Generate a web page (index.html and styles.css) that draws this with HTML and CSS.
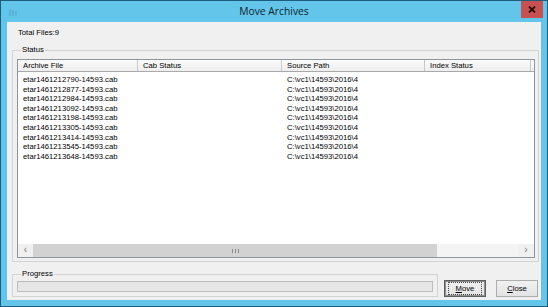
FILE: index.html
```html
<!DOCTYPE html>
<html lang="en">
<head>
    <meta charset="UTF-8">
    <title>Move Archives</title>
    <link rel="stylesheet" href="styles.css">
</head>
<body>
    <div class="window">
        <div class="titlebar">
            <div class="app-icon">
                <svg width="10" height="9" viewBox="0 0 10 9">
                    <path d="M1 1v7M4 2v6M7 3v5" stroke="#3f8fb0" stroke-width="1" fill="none"/>
                </svg>
            </div>
            <div class="title">Move Archives</div>
            <div class="caption-btns">
                <div class="close-btn">
                    <svg width="8" height="7" viewBox="0 0 8 7">
                        <path d="M1 0.5L7 6.5M7 0.5L1 6.5" stroke="#2b0f0f" stroke-width="1.8"/>
                    </svg>
                </div>
            </div>
        </div>
        <div class="client">
            <div class="total">Total Files:9</div>
            <fieldset class="group status-group">
                <legend>Status</legend>
                <div class="listview">
                    <div class="lv-header">
                        <div class="col">Archive File</div>
                        <div class="col">Cab Status</div>
                        <div class="col">Source Path</div>
                        <div class="col">Index Status</div>
                    </div>
                    <div class="lv-body" id="rows">
                        <!-- rows filled by script -->
                    </div>
                    <div class="hscroll">
                        <div class="sb-btn left">&lsaquo;</div>
                        <div class="sb-thumb"><span class="grip"></span></div>
                        <div class="sb-track"></div>
                        <div class="sb-btn right">&rsaquo;</div>
                    </div>
                </div>
            </fieldset>
            <div class="bottom-row">
                <fieldset class="group progress-group">
                    <legend>Progress</legend>
                    <div class="progress"></div>
                </fieldset>
                <div class="buttons">
                    <button class="btn default"><span class="focus"><u>M</u>ove</span></button>
                    <button class="btn"><span><u>C</u>lose</span></button>
                </div>
            </div>
        </div>
    </div>
    <script>
    // archives waiting to be moved
    const archives = [
        "etar1461212790-14593.cab",
        "etar1461212877-14593.cab",
        "etar1461212984-14593.cab",
        "etar1461213092-14593.cab",
        "etar1461213198-14593.cab",
        "etar1461213305-14593.cab",
        "etar1461213414-14593.cab",
        "etar1461213545-14593.cab",
        "etar1461213648-14593.cab"
    ];
    const rows = document.getElementById('rows');
    archives.forEach(name => {
        rows.innerHTML += `
            <div class="lv-row">
                <div class="col">${name}</div>
                <div class="col"></div>
                <div class="col">C:\\vc1\\14593\\2016\\4</div>
                <div class="col"></div>
            </div>
        `;
    });
    </script>
</body>
</html>
```

FILE: styles.css
```css
body {
    margin: 0;
    padding: 0;
    font-family: "Liberation Sans", Arial, sans-serif;
    font-size: 7.7px;
    color: #000;
}
.window {
    width: 548px;
    height: 307px;
    box-sizing: border-box;
    border: 1px solid #1f5d7c;
    background: #62c5e9;
    display: flex;
    flex-direction: column;
}
.titlebar {
    height: 21px;
    display: grid;
    grid-template-columns: 1fr auto 1fr;
    align-items: start;
}
.app-icon {
    padding: 7px 0 0 8px;
    opacity: 0.6;
}
.title {
    font-family: "Open Sans", "Noto Sans", sans-serif;
    font-size: 10.3px;
    line-height: 21px;
    color: #10242e;
}
.caption-btns {
    display: flex;
    justify-content: flex-end;
    padding-right: 4px;
}
.close-btn {
    width: 22px;
    height: 17px;
    background: #c75050;
    display: flex;
    align-items: center;
    justify-content: center;
}
.client {
    flex: 1;
    margin: 0 6px 6px 6px;
    background: #f0f0f0;
    display: flex;
    flex-direction: column;
    padding: 6px 2px 0 5px;
}
.total {
    line-height: 10px;
    padding-left: 6px;
}
.group {
    margin: 0;
    border: 1px solid #d3d3d3;
    padding: 0;
}
.group legend {
    padding: 0 1px;
    margin-left: 4px;
    line-height: 10px;
}
.status-group {
    margin-top: 7px;
    padding: 4px 3px 3px 4px;
}
.listview {
    height: 199px;
    box-sizing: border-box;
    border: 1px solid #8f959c;
    background: #fff;
    display: flex;
    flex-direction: column;
}
.lv-header,
.lv-row {
    display: grid;
    grid-template-columns: 120px 144px 143px 106px;
}
.lv-header {
    height: 11px;
    background: linear-gradient(#fbfbfb, #eeeeee);
    border-bottom: 1px solid #a9a9a9;
}
.lv-header .col {
    border-right: 1px solid #c9c9c9;
    line-height: 11px;
    padding-left: 5px;
}
.lv-body {
    flex: 1;
    padding-top: 3px;
}
.lv-row {
    height: 9.6px;
    line-height: 9.6px;
}
.lv-row .col {
    padding-left: 5px;
    white-space: nowrap;
}
.hscroll {
    height: 13px;
    display: flex;
    background: #f0f0f0;
}
.sb-btn {
    width: 15px;
    text-align: center;
    line-height: 12px;
    font-size: 10px;
    color: #777;
}
.sb-btn.right {
    width: 16px;
}
.sb-thumb {
    width: 404px;
    background: #d2d2d2;
    display: flex;
    align-items: center;
    justify-content: center;
}
.grip {
    width: 5px;
    height: 4px;
    border-left: 1px solid #8a8a8a;
    border-right: 1px solid #8a8a8a;
    background: linear-gradient(90deg, transparent 2px, #8a8a8a 2px, #8a8a8a 3px, transparent 3px);
}
.sb-track {
    flex: 1;
    background: #f4f4f4;
}
.bottom-row {
    display: flex;
    align-items: flex-end;
    margin-top: 7px;
}
.progress-group {
    width: 426px;
    box-sizing: border-box;
    padding: 2px 4px 4px 4px;
}
.progress {
    height: 11px;
    box-sizing: border-box;
    border: 1px solid #bcbcbc;
    background: #e6e6e6;
}
.buttons {
    display: flex;
    gap: 10px;
    margin-left: 6px;
    margin-bottom: 0;
}
.btn {
    width: 42px;
    height: 17px;
    padding: 0;
    font-family: inherit;
    font-size: 7.7px;
    color: #000;
    background: linear-gradient(#f1f1f1, #e3e3e3);
    border: 1px solid #adadad;
    display: flex;
    align-items: center;
    justify-content: center;
}
.btn.default {
    border: 1px solid #5f5f5f;
    box-shadow: inset 0 0 0 1px #8c8c8c;
}
.btn .focus {
    outline: 1px dotted #444;
    outline-offset: 1px;
    padding: 0 6px;
}
```
